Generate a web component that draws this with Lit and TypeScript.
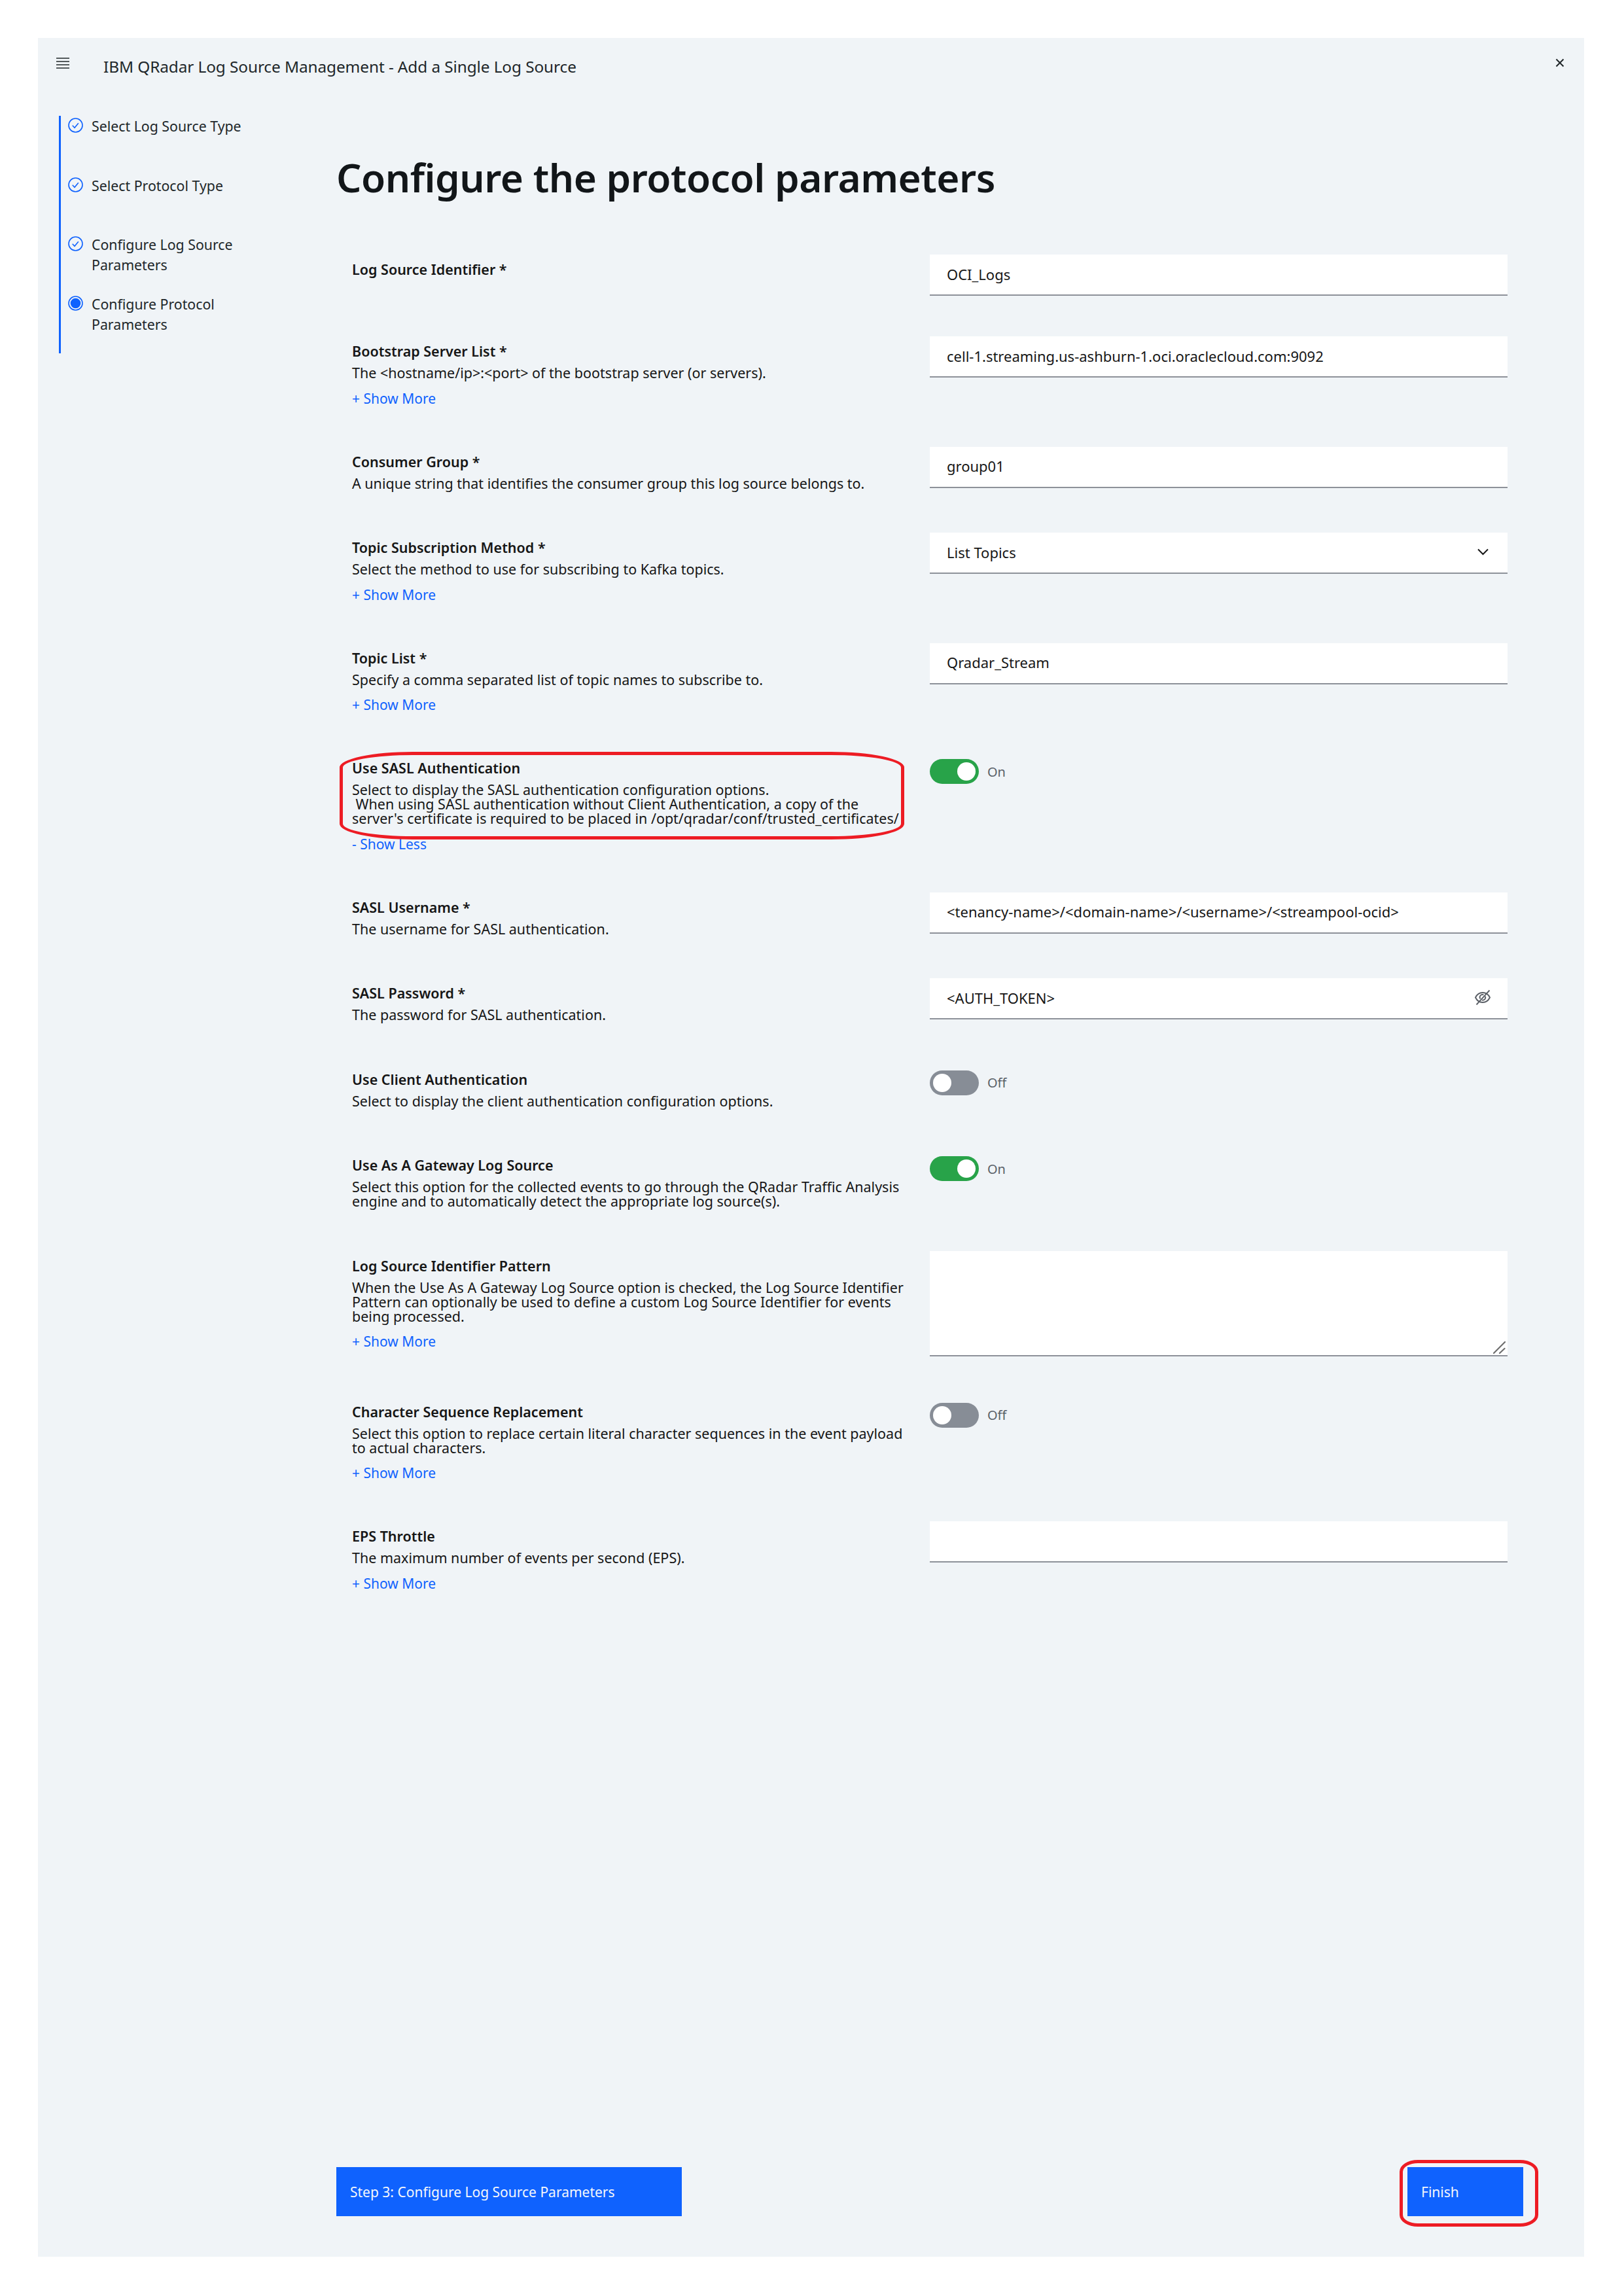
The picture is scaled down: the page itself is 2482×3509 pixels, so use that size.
import { LitElement, html, css, svg } from "lit";
import { customElement } from "lit/decorators.js";

type Row = {
  label: string;
  desc?: string[];
  more?: string;
  control: "input" | "select" | "password" | "toggle" | "textarea";
  value?: string;
  on?: boolean;
};

const ROWS: Row[] = [
  { label: "Log Source Identifier *", control: "input", value: "OCI_Logs" },
  { label: "Bootstrap Server List *", desc: ["The <hostname/ip>:<port> of the bootstrap server (or servers)."], more: "+ Show More", control: "input", value: "cell-1.streaming.us-ashburn-1.oci.oraclecloud.com:9092" },
  { label: "Consumer Group *", desc: ["A unique string that identifies the consumer group this log source belongs to."], control: "input", value: "group01" },
  { label: "Topic Subscription Method *", desc: ["Select the method to use for subscribing to Kafka topics."], more: "+ Show More", control: "select", value: "List Topics" },
  { label: "Topic List *", desc: ["Specify a comma separated list of topic names to subscribe to."], more: "+ Show More", control: "input", value: "Qradar_Stream" },
  { label: "Use SASL Authentication", desc: ["Select to display the SASL authentication configuration options.", "\u00a0When using SASL authentication without Client Authentication, a copy of the", "server's certificate is required to be placed in /opt/qradar/conf/trusted_certificates/"], more: "- Show Less", control: "toggle", on: true },
  { label: "SASL Username *", desc: ["The username for SASL authentication."], control: "input", value: "<tenancy-name>/<domain-name>/<username>/<streampool-ocid>" },
  { label: "SASL Password *", desc: ["The password for SASL authentication."], control: "password", value: "<AUTH_TOKEN>" },
  { label: "Use Client Authentication", desc: ["Select to display the client authentication configuration options."], control: "toggle", on: false },
  { label: "Use As A Gateway Log Source", desc: ["Select this option for the collected events to go through the QRadar Traffic Analysis", "engine and to automatically detect the appropriate log source(s)."], control: "toggle", on: true },
  { label: "Log Source Identifier Pattern", desc: ["When the Use As A Gateway Log Source option is checked, the Log Source Identifier", "Pattern can optionally be used to define a custom Log Source Identifier for events", "being processed."], more: "+ Show More", control: "textarea" },
  { label: "Character Sequence Replacement", desc: ["Select this option to replace certain literal character sequences in the event payload", "to actual characters."], more: "+ Show More", control: "toggle", on: false },
  { label: "EPS Throttle", desc: ["The maximum number of events per second (EPS)."], more: "+ Show More", control: "input", value: "" },
];

const STEPS: { text: string[]; active?: boolean }[] = [
  { text: ["Select Log Source Type"] },
  { text: ["Select Protocol Type"] },
  { text: ["Configure Log Source", "Parameters"] },
  { text: ["Configure Protocol", "Parameters"], active: true },
];

@customElement("app-root")
export class AppRoot extends LitElement {
  static styles = css`
    :host {
      display: block;
      width: 2482px;
      height: 3509px;
      padding: 58px 61px 60px 58px;
      box-sizing: border-box;
      background: #fff;
      font-family: "Noto Sans", "Open Sans", sans-serif;
      color: #161616;
      font-size: 21px;
    }
    .panel {
      position: relative;
      height: 100%;
      background: #f0f4f7;
      display: flex;
      flex-direction: column;
    }
    header {
      height: 86px;
      display: flex;
      align-items: center;
      padding-left: 28px;
      flex: none;
    }
    .burger { width: 20px; height: 18px; display: block; margin-top: -8px; }
    .app-title { margin-left: 52px; font-size: 24.4px; letter-spacing: -0.1px; color: #21272a; white-space: nowrap; }
    .close { margin-left: auto; margin-right: 30px; width: 14px; height: 14px; display: block; margin-top: -11px; }
    .body { display: flex; flex: 1; min-height: 0; }
    aside {
      width: 424px;
      margin-left: 32px;
      flex: none;
      height: 363px;
      margin-top: 33px;
      border-left: 3px solid #0f62fe;
      box-sizing: border-box;
    }
    .step { display: flex; height: 90.5px; padding-left: 11px; }
    .step svg { width: 23px; height: 23px; margin-top: 3px; flex: none; display: block; }
    .step-text { margin-left: 13px; font-size: 21.3px; line-height: 31px; color: #21272a; white-space: nowrap; }
    main { flex: 1; min-width: 0; }
    h1 {
      margin: 87px 0 78px;
      font-size: 60.3px;
      line-height: 80px;
      font-weight: 600;
      color: #121619;
      letter-spacing: -0.5px;
      white-space: nowrap;
    }
    .rows { display: flex; flex-direction: column; gap: 62px; padding-left: 24px; }
    .row { display: flex; }
    .left { width: 883px; flex: none; }
    .label { height: 44px; line-height: 46px; font-size: 21.5px; font-weight: 600; color: #161616; white-space: nowrap; }
    .desc { margin-top: 1px; padding-bottom: 2.5px; font-size: 21.5px; line-height: 22px; color: #161616; white-space: nowrap; }
    .desc div { height: 22px; }
    .more { margin-top: 13px; height: 24px; line-height: 24px; font-size: 21px; color: #0f62fe; white-space: nowrap; }
    .right { width: 883px; flex: none; }
    .field {
      height: 63px;
      box-sizing: border-box;
      background: #fff;
      border-bottom: 2px solid #8d9199;
      display: flex;
      align-items: center;
      padding: 0 0 2px 26px;
      font-size: 22px;
      color: #161616;
      white-space: nowrap;
      justify-content: space-between;
    }
    .field svg { display: block; flex: none; }
    .chev { width: 17px; height: 11px; margin-right: 29px; }
    .eye { width: 26px; height: 24px; margin-right: 25px; margin-top: -1px; }
    .area { height: 161px; position: relative; background: #fff; border-bottom: 2px solid #8d9199; box-sizing: border-box; }
    .grip { position: absolute; right: 2px; bottom: 1px; width: 20px; height: 20px; display: block; }
    .toggle-wrap { display: flex; align-items: center; margin-top: 9px; }
    .toggle { width: 75px; height: 38px; border-radius: 19px; background: #878d96; position: relative; flex: none; }
    .toggle.on { background: #28a349; }
    .thumb { position: absolute; top: 5px; left: 5px; width: 28px; height: 28px; border-radius: 50%; background: #fff; }
    .toggle.on .thumb { left: auto; right: 5px; }
    .toggle-text { margin-left: 13px; font-size: 20px; color: #5a6168; }
    footer {
      display: flex;
      justify-content: space-between;
      align-items: flex-end;
      padding: 0 93px 62px 456px;
      flex: none;
    }
    .btn {
      height: 75px;
      display: flex;
      align-items: center;
      background: #0f62fe;
      color: #f4f7fb;
      font-size: 21px;
      white-space: nowrap;
      box-sizing: border-box;
    }
    .btn.back { width: 528px; padding-left: 21px; }
    .btn.finish { width: 177px; padding-left: 21px; }
    .mark { position: absolute; border: 5px solid #ed1c24; box-sizing: border-box; pointer-events: none; }
    .mark.sasl { left: 461px; top: 1091px; width: 863px; height: 134px; border-radius: 112px / 24px; }
    .mark.finish { left: 2081px; top: 3243px; width: 212px; height: 102px; border-radius: 28px / 18px; }
  `;

  private icon(active?: boolean) {
    return html`<svg viewBox="0 0 23 23" fill="none" aria-hidden="true">
      ${active
        ? svg`<circle cx="11.5" cy="11.5" r="10.5" stroke="#0f62fe" stroke-width="1.6"/><circle cx="11.5" cy="11.5" r="7.8" fill="#0f62fe"/>`
        : svg`<circle cx="11.5" cy="11.5" r="10.5" stroke="#0f62fe" stroke-width="1.6"/><path d="M6.8 11.8l3.2 3.4 5.8-7" stroke="#0f62fe" stroke-width="1.6"/>`}
    </svg>`;
  }

  private control(r: Row) {
    switch (r.control) {
      case "toggle":
        return html`<div class="toggle-wrap"><div class="toggle ${r.on ? "on" : ""}"><div class="thumb"></div></div><span class="toggle-text">${r.on ? "On" : "Off"}</span></div>`;
      case "textarea":
        return html`<div class="area"><svg class="grip" viewBox="0 0 20 20" fill="none"><path d="M1 18L18 1M10 18l7.5-7" stroke="#6f6f6f" stroke-width="2.2" stroke-linecap="round"/></svg></div>`;
      case "select":
        return html`<div class="field"><span>${r.value}</span><svg class="chev" viewBox="0 0 17 11" fill="none"><path d="M1 1.5l7.5 7.5L16 1.5" stroke="#161616" stroke-width="2"/></svg></div>`;
      case "password":
        return html`<div class="field"><span>${r.value}</span><svg class="eye" viewBox="0 0 26 24" fill="none" stroke="#5a5f66" stroke-width="1.9"><path d="M2 12.5C4.5 7.5 8.5 5 13 5s8.5 2.5 11 7.5C21.5 17.5 17.5 20 13 20S4.5 17.5 2 12.5z"/><path d="M9.5 14.5a4 4 0 0 1 5-6"/><path d="M16.8 10.8a4 4 0 0 1-4.8 5.6"/><path d="M3.5 23.5L23.5 1.5"/></svg></div>`;
      default:
        return html`<div class="field"><span>${r.value}</span></div>`;
    }
  }

  render() {
    return html`<div class="panel">
      <header>
        <svg class="burger" viewBox="0 0 20 18"><path d="M0 1h20M0 6h20M0 11h20M0 16h20" stroke="#21272a" stroke-width="1.6"/></svg>
        <div class="app-title">IBM QRadar Log Source Management - Add a Single Log Source</div>
        <svg class="close" viewBox="0 0 14 14"><path d="M1.5 1.5l11 11M12.5 1.5l-11 11" stroke="#21272a" stroke-width="2"/></svg>
      </header>
      <div class="body">
        <aside>
          ${STEPS.map((s) => html`<div class="step">${this.icon(s.active)}<div class="step-text">${s.text.map((t) => html`<div>${t}</div>`)}</div></div>`)}
        </aside>
        <main>
          <h1>Configure the protocol parameters</h1>
          <div class="rows">
            ${ROWS.map((r) => html`<div class="row">
              <div class="left">
                <div class="label">${r.label}</div>
                ${r.desc ? html`<div class="desc">${r.desc.map((d) => html`<div>${d}</div>`)}</div>` : ""}
                ${r.more ? html`<div class="more">${r.more}</div>` : ""}
              </div>
              <div class="right">${this.control(r)}</div>
            </div>`)}
          </div>
        </main>
      </div>
      <footer>
        <div class="btn back">Step 3: Configure Log Source Parameters</div>
        <div class="btn finish">Finish</div>
      </footer>
      <div class="mark sasl"></div>
      <div class="mark finish"></div>
    </div>`;
  }
}
